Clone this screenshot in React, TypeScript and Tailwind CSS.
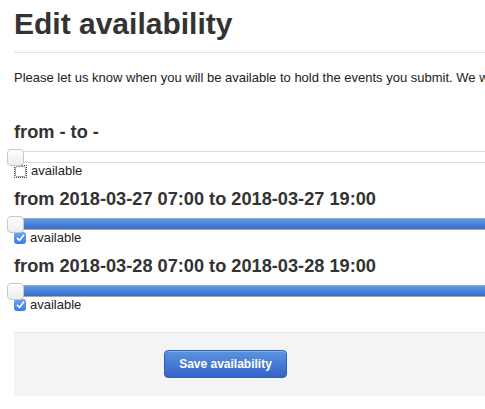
import React from "react";

type Slot = {
    label: string;
    available: boolean;
    focused?: boolean;
};

const slots: Slot[] = [
    { label: "from - to -", available: false, focused: true },
    { label: "from 2018-03-27 07:00 to 2018-03-27 19:00", available: true },
    { label: "from 2018-03-28 07:00 to 2018-03-28 19:00", available: true },
];

function Check({ checked, focused }: { checked: boolean; focused?: boolean }) {
    if (checked) {
        return (
            <span className="flex h-[12px] w-[12px] items-center justify-center rounded-[3px] bg-gradient-to-b from-[#6aa6f5] to-[#3a7ee8]">
                <svg width="9" height="8" viewBox="0 0 9 8" fill="none">
                    <path
                        d="M1.3 4.3 L3.4 6.4 L7.6 1.2"
                        stroke="#fff"
                        strokeWidth="1.6"
                        strokeLinecap="round"
                        strokeLinejoin="round"
                    />
                </svg>
            </span>
        );
    }
    return (
        <span
            className={
                focused
                    ? "flex h-[13px] w-[13px] items-center justify-center border border-dotted border-[#444]"
                    : "flex h-[13px] w-[13px] items-center justify-center"
            }
        >
            <span className="h-[11px] w-[11px] rounded-[2px] border border-[#a9a9a9] bg-white" />
        </span>
    );
}

function Slider({ filled }: { filled: boolean }) {
    return (
        <div
            className={
                filled
                    ? "relative h-[12px] border-t border-b border-[#a6a6a6] bg-gradient-to-b from-[#5d9ae4] to-[#3a6cd0]"
                    : "relative h-[12px] border-t border-b border-[#dcdcdc] bg-white"
            }
        >
            <span className="absolute left-[-7px] top-[-3px] h-[17px] w-[17px] rounded-[4px] border border-[#c8c8c8] bg-gradient-to-b from-white to-[#ececec]" />
        </div>
    );
}

export default function App() {
    return (
        <div className="h-[409px] w-[485px] overflow-hidden bg-white font-['Liberation_Sans',Arial,sans-serif] text-[#333]">
            <div className="w-[940px] pl-[14px]">
                <h1 className="border-b border-[#e3e3e3] pt-[6px] pb-[10px] text-[30px] font-bold leading-[36px]">
                    Edit availability
                </h1>
                <p className="mt-[16px] text-[13px] leading-[18px] text-[#222]">
                    Please let us know when you will be available to hold the events you submit. We will try to schedule your events accordingly.
                </p>

                <div className="mt-[35px] flex flex-col gap-[10px]">
                    {slots.map((slot) => (
                        <div key={slot.label}>
                            <h3 className="text-[18.2px] font-bold leading-[20px]">{slot.label}</h3>
                            <div className="mt-[9px]">
                                <Slider filled={slot.available} />
                            </div>
                            <label className="flex h-[16px] items-center gap-[4px] text-[13px] text-[#222]">
                                <Check checked={slot.available} focused={slot.focused} />
                                available
                            </label>
                        </div>
                    ))}
                </div>

                <div className="mt-[19px] border-t border-[#e3e3e3] bg-[#f4f4f4] pt-[17px] pb-[18px] pl-[150px]">
                    <button className="h-[28px] w-[123px] rounded-[4px] border border-[#2f5fc0] bg-gradient-to-b from-[#5c93e0] to-[#3563c8] text-[12px] font-bold text-white shadow-[inset_0_1px_0_rgba(255,255,255,0.25)]">
                        Save availability
                    </button>
                </div>
            </div>
        </div>
    );
}
